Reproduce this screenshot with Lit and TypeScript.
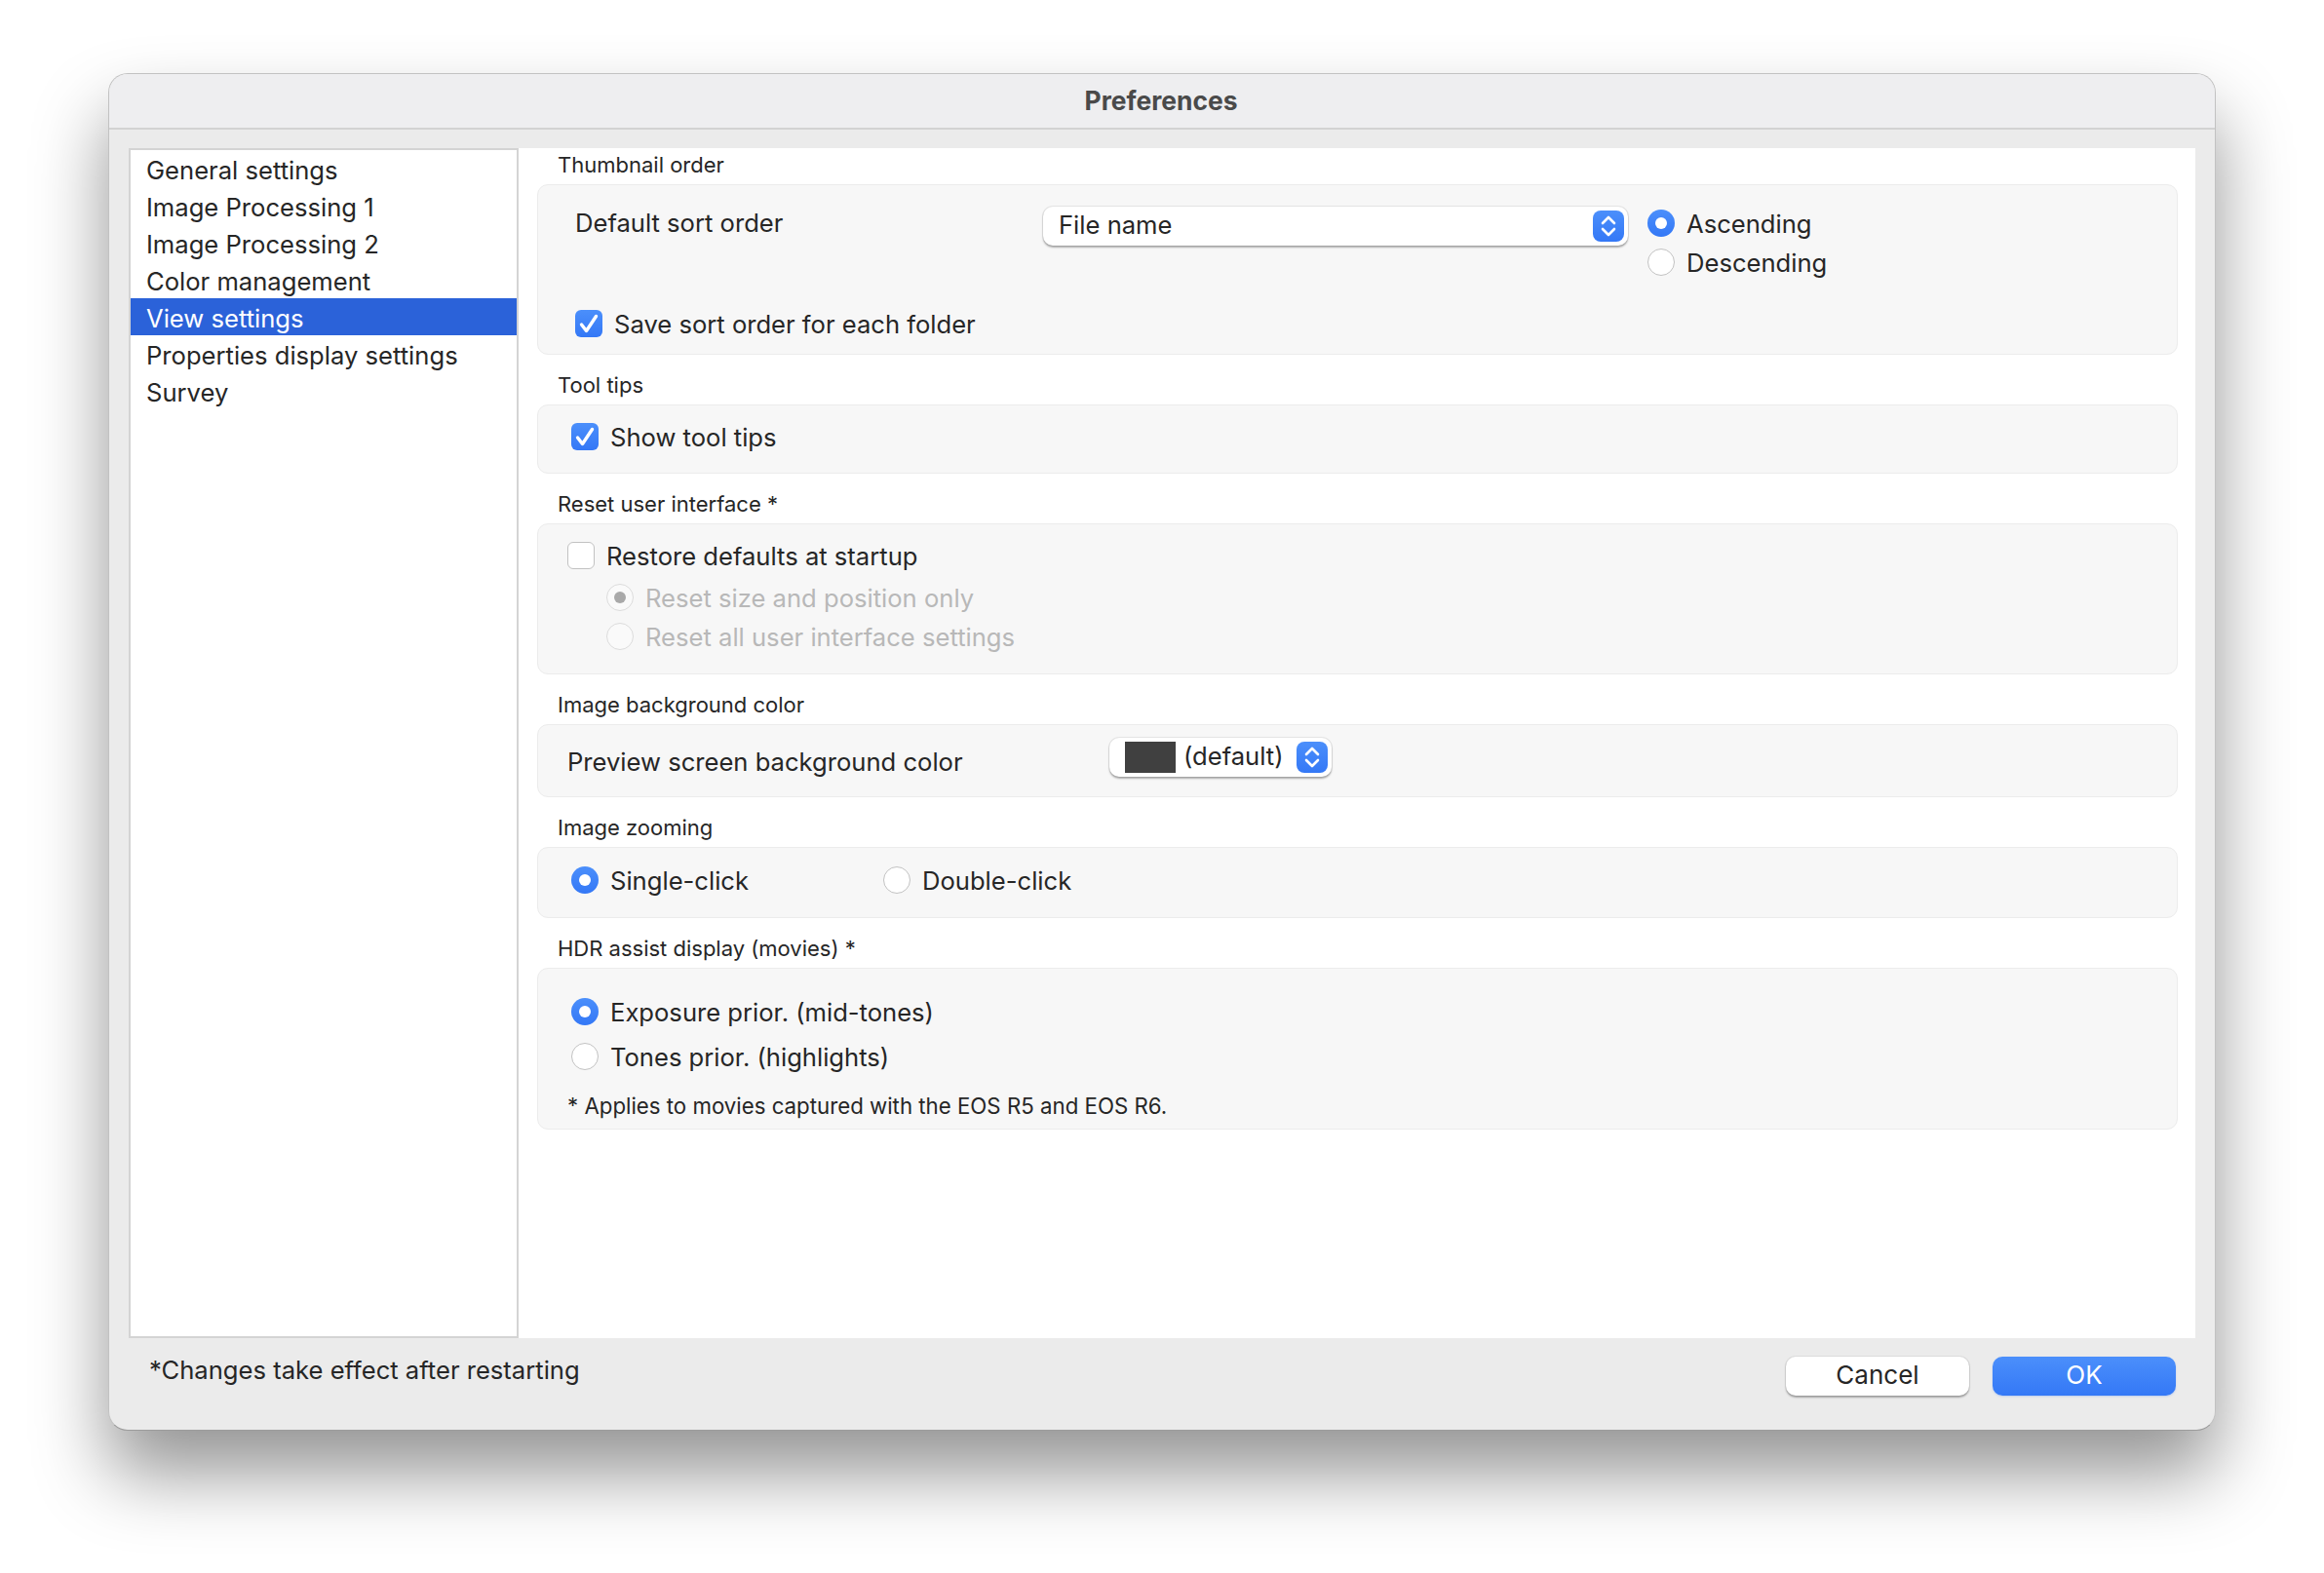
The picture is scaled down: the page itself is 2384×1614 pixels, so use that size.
import { LitElement, html, css } from 'lit';
import { customElement } from 'lit/decorators.js';

const NAV = [
  'General settings',
  'Image Processing 1',
  'Image Processing 2',
  'Color management',
  'View settings',
  'Properties display settings',
  'Survey',
];

@customElement('app-root')
export class AppRoot extends LitElement {
  static styles = css`
    :host {
      display: block;
      height: 1614px;
      background: #fff;
      overflow: hidden;
      font-family: Inter, 'Liberation Sans', sans-serif;
      font-size: 25.6px;
      color: #262626;
    }
    * {
      box-sizing: border-box;
    }
    .window {
      display: flex;
      flex-direction: column;
      width: 2162px;
      height: 1393px;
      margin: 75px 0 0 111px;
      border: 1px solid #c2c2c2;
      border-bottom-color: #9c9c9c;
      border-radius: 20px;
      background: #ebebeb;
      box-shadow: 0 44px 76px rgba(0, 0, 0, 0.42);
    }
    .titlebar {
      height: 57px;
      flex: none;
      display: flex;
      align-items: center;
      justify-content: center;
      padding: 0 2px 1px 0;
      background: #eeeef0;
      border-bottom: 2px solid #d2d2d2;
      border-radius: 19px 19px 0 0;
      font-size: 26.4px;
      font-weight: 700;
      color: #4a4a4a;
    }
    .body {
      display: flex;
      height: 1240px;
      flex: none;
      padding: 19px 20px 0 20px;
    }
    .nav {
      width: 400px;
      flex: none;
      background: #fff;
      border: 2px solid #d4d4d4;
    }
    .nav div {
      height: 38px;
      line-height: 41px;
      padding-left: 16px;
    }
    .nav div.sel {
      background: #2b62d9;
      color: #fff;
    }
    .main {
      flex: 1;
      background: #fff;
      padding: 2px 18px 0 19px;
    }
    .section {
      margin-top: 16px;
    }
    .section:first-child {
      margin-top: 0;
    }
    .caption {
      height: 30px;
      line-height: 30px;
      margin-bottom: 5px;
      padding-left: 21px;
      font-size: 22px;
    }
    .group {
      background: #f7f7f7;
      border: 1px solid #ececec;
      border-radius: 11px;
    }
    .g-sort {
      height: 175px;
      padding: 22px 0 0 38px;
    }
    .g-tips {
      height: 71px;
      padding: 18px 0 0 34px;
    }
    .g-reset {
      height: 155px;
      padding: 18px 0 0 30px;
    }
    .g-bg {
      height: 75px;
      padding: 13px 0 0 30px;
    }
    .g-zoom {
      height: 73px;
      padding: 19px 0 0 34px;
    }
    .g-hdr {
      height: 166px;
      padding: 30px 0 0 34px;
    }
    .row {
      display: flex;
      align-items: flex-start;
    }
    .sort-label {
      width: 480px;
      line-height: 34px;
    }
    .popup {
      position: relative;
      display: flex;
      align-items: center;
      height: 40px;
      padding-bottom: 3px;
      background: #fff;
      border-radius: 10px;
      box-shadow: 0 0 0 1px rgba(0, 0, 0, 0.06), 0 1.5px 2px rgba(0, 0, 0, 0.3);
    }
    .popup.file {
      width: 600px;
      padding-left: 16px;
      margin-right: 20px;
    }
    .popup.color {
      width: 228px;
      padding-left: 16px;
    }
    .stepper {
      position: absolute;
      top: 4px;
      right: 4px;
      width: 32px;
      height: 32px;
      border-radius: 8px;
      background: linear-gradient(#4b8ffb, #3478f6);
    }
    .stepper svg {
      display: block;
    }
    .swatch {
      width: 52px;
      height: 32px;
      margin: 3px 8px 0 0;
      background: #404040;
    }
    .opts {
      display: flex;
      flex-direction: column;
      gap: 12px;
      margin-top: 3px;
    }
    .opt {
      display: flex;
      align-items: center;
      gap: 12px;
      height: 28px;
      line-height: 28px;
      white-space: nowrap;
    }
    .opt .text {
      padding-top: 2px;
    }
    .opt.off {
      color: #b8b8b8;
    }
    .radio {
      width: 28px;
      height: 28px;
      flex: none;
      display: flex;
      align-items: center;
      justify-content: center;
      border-radius: 50%;
      background: #fff;
      border: 1px solid #c2c2c2;
    }
    .radio.on {
      border: none;
      background: linear-gradient(#4b8ffb, #3478f6);
    }
    .radio.on i {
      width: 12px;
      height: 12px;
      border-radius: 50%;
      background: #fff;
    }
    .opt.off .radio {
      background: #fafafa;
      border: 1px solid #dcdcdc;
    }
    .opt.off .radio i {
      width: 12px;
      height: 12px;
      border-radius: 50%;
      background: #a9a9a9;
    }
    .check {
      width: 28px;
      height: 28px;
      flex: none;
      border-radius: 6px;
      background: #fff;
      border: 1px solid #c2c2c2;
    }
    .check.on {
      border: none;
      background: linear-gradient(#4b8ffb, #3478f6);
    }
    .check svg {
      display: block;
    }
    .save {
      margin: 35px 0 0 0;
    }
    .sub {
      display: flex;
      flex-direction: column;
      gap: 12px;
      margin: 15px 0 0 40px;
    }
    .bg-label {
      width: 556px;
      line-height: 40px;
      padding-top: 5px;
    }
    .zoom-first {
      width: 320px;
    }
    .hdr-opts {
      display: flex;
      flex-direction: column;
      gap: 18px;
    }
    .note {
      margin: 23px 0 0 -4px;
      line-height: 28px;
      font-size: 22.25px;
    }
    .footer {
      flex: 1;
      display: flex;
      justify-content: space-between;
      padding: 19px 40px 0 41px;
    }
    .hint {
      line-height: 28px;
    }
    .buttons {
      display: flex;
      gap: 24px;
    }
    .btn {
      width: 188px;
      height: 40px;
      line-height: 38px;
      text-align: center;
      border-radius: 10px;
      font-size: 26px;
      background: #fff;
      box-shadow: 0 0 0 1px rgba(0, 0, 0, 0.05), 0 1.5px 2px rgba(0, 0, 0, 0.3);
    }
    .btn.primary {
      color: #fff;
      background: linear-gradient(#4b8ffb, #3478f6);
      box-shadow: 0 1px 2px rgba(52, 120, 246, 0.25);
    }
  `;

  private stepper() {
    return html`<span class="stepper">
      <svg width="32" height="32" viewBox="0 0 32 32" fill="none" stroke="#fff" stroke-width="2.6" stroke-linecap="round" stroke-linejoin="round">
        <path d="M10 13 16 7l6 6"></path>
        <path d="M10 19 16 25l6-6"></path>
      </svg>
    </span>`;
  }

  private radio(label: string, on = false, off = false) {
    return html`<label class="opt ${off ? 'off' : ''}">
      <span class="radio ${on ? 'on' : ''}">${on || (off && label.includes('size')) ? html`<i></i>` : ''}</span>
      <span class="text">${label}</span>
    </label>`;
  }

  private check(label: string, on: boolean, cls: string) {
    return html`<label class="opt ${cls}">
      <span class="check ${on ? 'on' : ''}">
        ${on
          ? html`<svg width="28" height="28" viewBox="0 0 28 28" fill="none" stroke="#fff" stroke-width="3.4" stroke-linecap="round" stroke-linejoin="round"><path d="M6.5 15 11.5 21.5 21.5 6.5"></path></svg>`
          : ''}
      </span>
      <span class="text">${label}</span>
    </label>`;
  }

  render() {
    return html`
      <div class="window">
        <div class="titlebar">Preferences</div>
        <div class="body">
          <div class="nav">
            ${NAV.map((n) => html`<div class="${n === 'View settings' ? 'sel' : ''}">${n}</div>`)}
          </div>
          <div class="main">
            <div class="section">
              <div class="caption">Thumbnail order</div>
              <div class="group g-sort">
                <div class="row">
                  <div class="sort-label">Default sort order</div>
                  <div class="popup file">File name ${this.stepper()}</div>
                  <div class="opts">
                    ${this.radio('Ascending', true)}
                    ${this.radio('Descending')}
                  </div>
                </div>
                ${this.check('Save sort order for each folder', true, 'save')}
              </div>
            </div>
            <div class="section">
              <div class="caption">Tool tips</div>
              <div class="group g-tips">${this.check('Show tool tips', true, '')}</div>
            </div>
            <div class="section">
              <div class="caption">Reset user interface *</div>
              <div class="group g-reset">
                ${this.check('Restore defaults at startup', false, '')}
                <div class="sub">
                  ${this.radio('Reset size and position only', false, true)}
                  ${this.radio('Reset all user interface settings', false, true)}
                </div>
              </div>
            </div>
            <div class="section">
              <div class="caption">Image background color</div>
              <div class="group g-bg">
                <div class="row">
                  <div class="bg-label">Preview screen background color</div>
                  <div class="popup color"><span class="swatch"></span>(default) ${this.stepper()}</div>
                </div>
              </div>
            </div>
            <div class="section">
              <div class="caption">Image zooming</div>
              <div class="group g-zoom">
                <div class="row">
                  <div class="zoom-first">${this.radio('Single-click', true)}</div>
                  ${this.radio('Double-click')}
                </div>
              </div>
            </div>
            <div class="section">
              <div class="caption">HDR assist display (movies) *</div>
              <div class="group g-hdr">
                <div class="hdr-opts">
                  ${this.radio('Exposure prior. (mid-tones)', true)}
                  ${this.radio('Tones prior. (highlights)')}
                </div>
                <div class="note">* Applies to movies captured with the EOS R5 and EOS R6.</div>
              </div>
            </div>
          </div>
        </div>
        <div class="footer">
          <div class="hint">*Changes take effect after restarting</div>
          <div class="buttons">
            <div class="btn">Cancel</div>
            <div class="btn primary">OK</div>
          </div>
        </div>
      </div>
    `;
  }
}
